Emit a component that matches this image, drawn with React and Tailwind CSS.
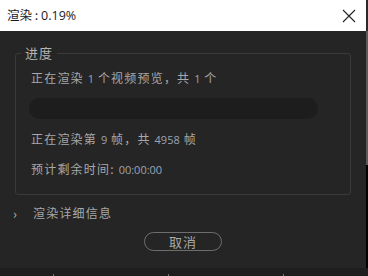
import React from "react";

const cjk = { fontFamily: '"Noto Sans CJK SC", "Noto Sans", sans-serif' };
const num = { fontFamily: '"Open Sans", "Noto Sans CJK SC", sans-serif' };

function Num({ children }) {
  return (
    <span className="text-[11px] text-[#9ea3b4] tracking-normal" style={num}>
      {children}
    </span>
  );
}

export default function App() {
  return (
    <div className="w-[368px] h-[276px] bg-[#1e1e1e] flex flex-col overflow-hidden" style={cjk}>
      <div className="flex h-[268px]">
        {/* dialog */}
        <div className="w-[366px] flex flex-col">
          {/* title bar */}
          <div className="h-[31px] bg-white flex items-center justify-between pl-[7px] pr-[10px]">
            <span className="text-[12.5px] text-[#1a1a1a] leading-none">
              渲染 : <span style={num}>0.19%</span>
            </span>
            <svg width="14" height="14" viewBox="0 0 14 14" className="text-[#222]">
              <path d="M1 1L13 13M13 1L1 13" stroke="currentColor" strokeWidth="1.1" fill="none" />
            </svg>
          </div>

          {/* body */}
          <div className="flex-1 bg-[#252525] px-[15px] pt-[14px] flex flex-col">
            <fieldset className="border border-[#3a3a3a] rounded-[3px] pl-[15px] pr-[15px] pt-[9px] pb-[16px]">
              <legend className="-ml-[10px] px-[4px] text-[13px] leading-[16px] text-[#b4b4b4] tracking-[1px]">
                进度
              </legend>
              <div className="text-[12px] leading-[16px] text-[#a8a8a8] tracking-[1.2px]">
                正在渲染 <Num>1</Num> 个视频预览，共 <Num>1</Num> 个
              </div>
              <div className="mt-[11px] -ml-[2px] w-[289px] h-[21px] rounded-full bg-[#1d1d1d]" />
              <div className="mt-[12px] text-[12px] leading-[16px] text-[#a8a8a8] tracking-[1.2px]">
                正在渲染第 <Num>9</Num> 帧，共 <Num>4958</Num> 帧
              </div>
              <div className="mt-[13px] text-[12px] leading-[16px] text-[#a8a8a8] tracking-[1.2px]">
                预计剩余时间: <Num>00:00:00</Num>
              </div>
            </fieldset>

            <div className="mt-[10px] -ml-[2px] h-[16px] flex items-center text-[12px] text-[#a8a8a8]">
              <span className="w-[20px] text-[13px] leading-none text-[#b0b0b0]">›</span>
              <span className="tracking-[1.2px] leading-[16px]">渲染详细信息</span>
            </div>

            <div className="mt-[11px] flex justify-center">
              <button className="w-[78px] h-[19px] rounded-full border border-[#6e6e6e] text-[13px] leading-none text-[#a8a8a8] tracking-[1px]">
                取消
              </button>
            </div>
          </div>
        </div>

        {/* window edge */}
        <div className="w-[2px] flex flex-col">
          <div className="h-[31px] bg-[#2a2a2a]" />
          <div className="h-[134px] bg-[#5a5a5a]" />
          <div className="flex-1 bg-black" />
        </div>
      </div>

      {/* strip below */}
      <div className="flex-1 flex items-end">
        <div className="ml-[53px] w-px h-[2px] bg-[#777]" />
        <div className="ml-[114px] w-px h-[2px] bg-[#777]" />
        <div className="ml-[114px] w-px h-[2px] bg-[#777]" />
      </div>
    </div>
  );
}
